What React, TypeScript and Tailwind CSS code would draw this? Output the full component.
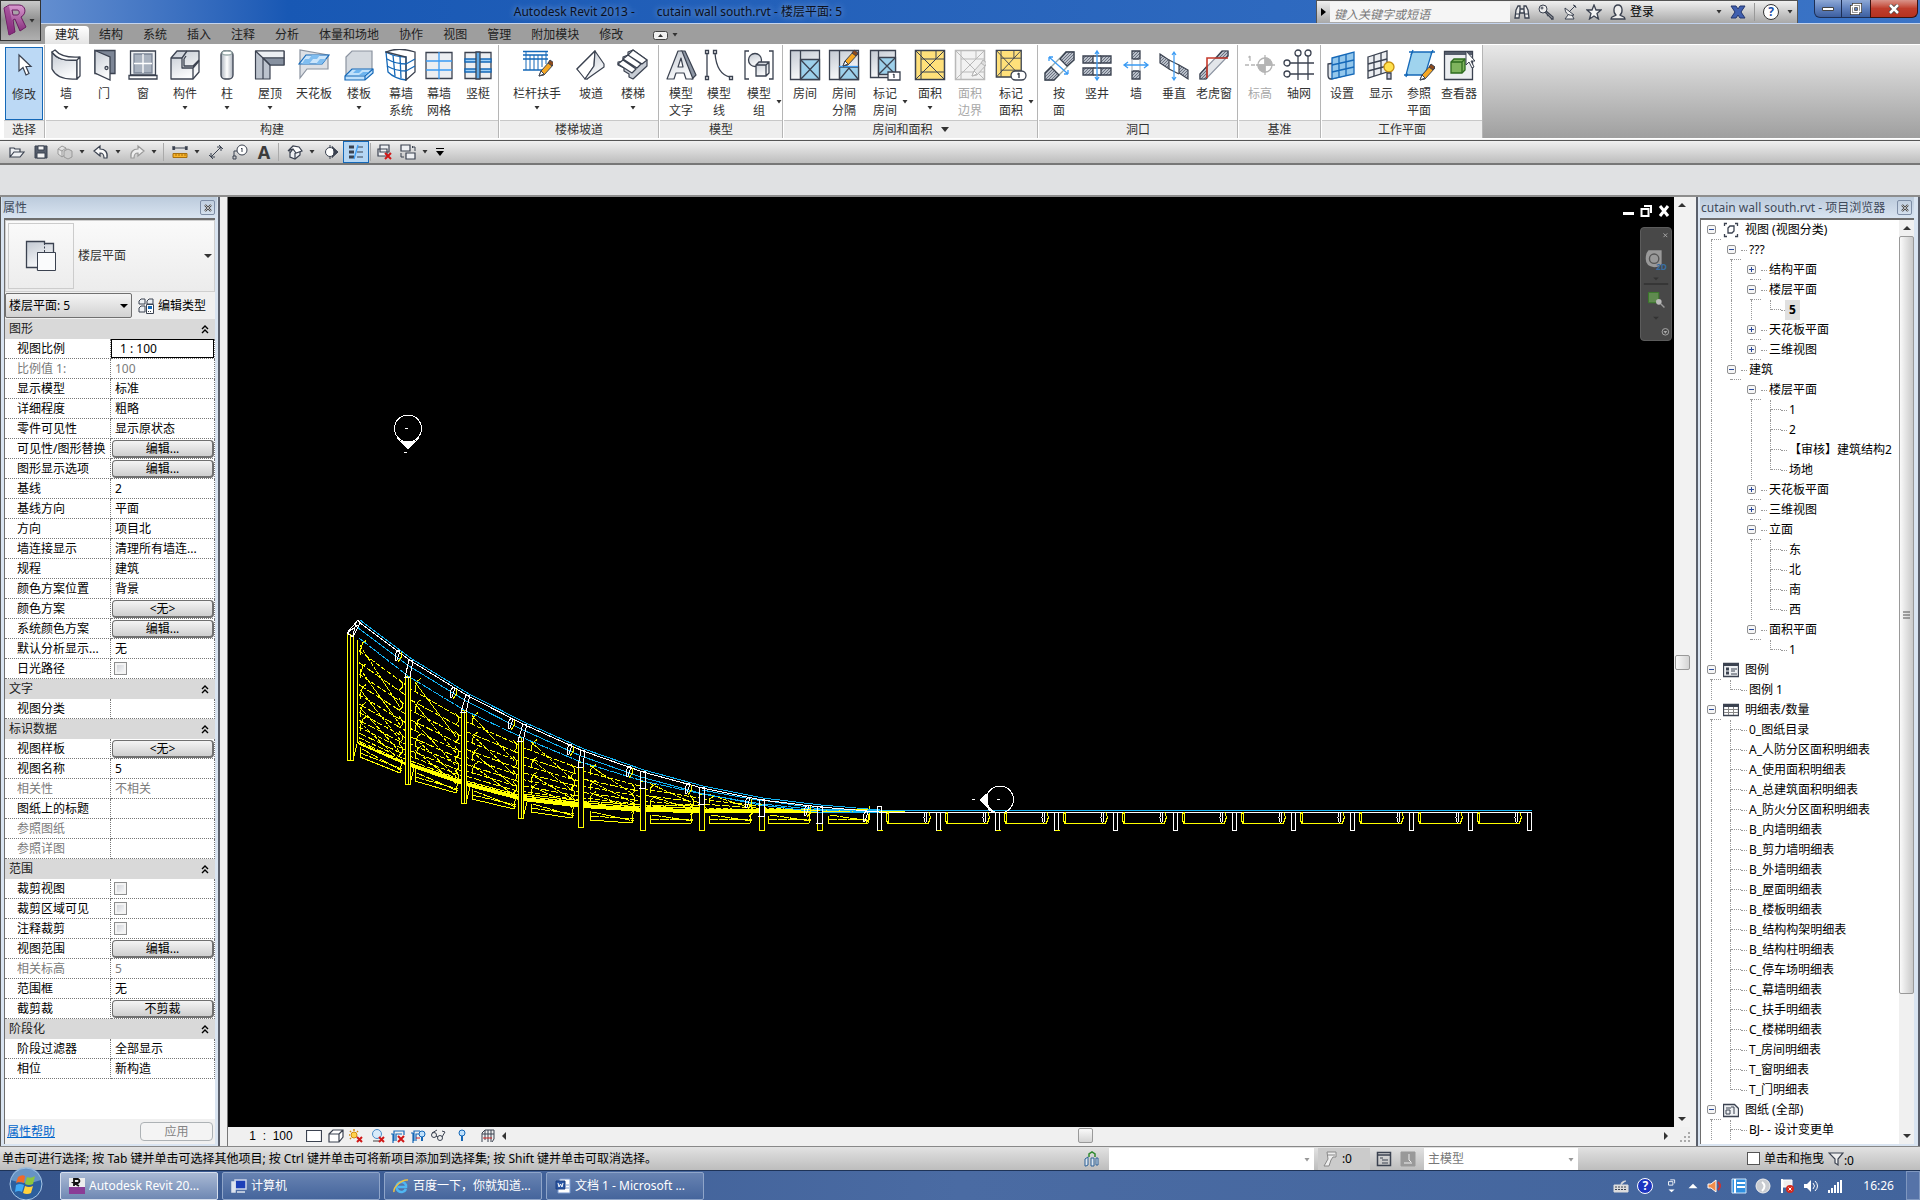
import type { ReactNode } from "react";
import clsx from "clsx";

const INK = "#3b4250";
const BLUE = "#1468b8";
const SKY = "#3a9bf4";

type Tool = {
  label: string[];
  icon: ReactNode;
  width: string;
  menu?: boolean;
  disabled?: boolean;
};

type Group = { title: string; tools: Tool[]; menu?: boolean; width: string };

/* ---------- ribbon icons ---------- */

function Pencil({ faded }: { faded?: boolean }) {
  return (
    <g stroke={faded ? "#b5b5b5" : INK} strokeWidth="1">
      <path d="M18 27 20 22 29 12l4 3-10 11z" fill={faded ? "#e8e8e8" : "#f7a823"} />
      <path d="M27 14l2-3 4 3-2 3z" fill={faded ? "#ddd" : "#8d4a1c"} />
      <path d="M18 27l2-5 3 3z" fill="#fff" />
    </g>
  );
}

function XBox({ fill, line = INK }: { fill: string; line?: string }) {
  return (
    <g stroke={line} fill="none">
      <path d="M1.500 1.500h29v29h-29z" fill={fill} strokeWidth="1.500" />
      <path d="M2 2l28 28M30 2 2 30M7 2v28M7 10h23M22 2v8M7 23h23" strokeWidth="1" />
    </g>
  );
}

const I = {
  cursor: <path d="M11 5v16l4-3.500 3 7.500 3-1.500-3-7h5z" fill="#fff" stroke={INK} strokeWidth="1.200" />,
  wall: (
    <g fill="url(#steel)" stroke={INK} strokeWidth="1.300" strokeLinejoin="round">
      <path d="M2 3c5 7 12 9 25 8v19C14 31 6 28 2 20z" />
      <path d="M2 3l3-2c5 6 12 8 25 7l-3 3C14 12 7 10 2 3zM27 11l3-3v19l-3 3z" fill="#fff" />
    </g>
  ),
  door: (
    <g stroke={INK} strokeWidth="1.300">
      <path d="M7 1.500h20v23H7z" fill="#7d8696" />
      <path d="M7 1.500 22 8v23L7 24z" fill="url(#steel)" />
      <circle cx="18.500" cy="19" r="1.500" fill="#fff" />
    </g>
  ),
  window: (
    <g stroke={INK} strokeWidth="1.300">
      <path d="M3.500 2h25v24h-25z" fill="#eef0f3" />
      <path d="M7 5h18v19H7z" fill="#a9b2bf" stroke="#7a8495" />
      <path d="M16 5v19M7 14.500h18" stroke="#fff" />
      <path d="M2 26.500h28v3.500H2z" fill="#fff" />
    </g>
  ),
  component: (
    <g fill="url(#steel)" stroke={INK} strokeWidth="1.300" strokeLinejoin="round">
      <path d="M2 9 8 2h22v21l-6 7H2z" />
      <path d="M2 9h11v10h11v11M13 9l5-7M17 7l-2 3v7h9l6-6M24 19l6-7" fill="none" />
    </g>
  ),
  column: (
    <g stroke={INK} strokeWidth="1.300">
      <rect x="10" y="2" width="12" height="28" rx="4" fill="url(#tube)" />
      <ellipse cx="16" cy="4" rx="5" ry="2" fill="#fff" stroke="#9aa" />
    </g>
  ),
  roof: (
    <g stroke={INK} strokeWidth="1.200" strokeLinejoin="round">
      <path d="M1.500 2H30v14H16v14H1.500z" fill="#bcc3cd" />
      <path d="M1.500 2 9 9h21V2z" fill="#eceff3" />
      <path d="M9 9h21v7H16z" fill="#8791a0" />
      <path d="M9 9l7 7M9 9v21" fill="none" />
    </g>
  ),
  ceiling: (
    <g strokeWidth="1.200">
      <path d="M2 1v28l7-9h21V6z" fill="#dde0e5" stroke="#8b93a0" />
      <path d="M8 6h23l-7 9H1z" fill="#cbe5fb" stroke={BLUE} />
      <path d="M14 6h8l-3 4h-8zM7 10h8l-4 5H4zM22 10h6l-4 5h-6z" fill="#7fbdf0" />
    </g>
  ),
  floor: (
    <g strokeWidth="1.200">
      <path d="M3 8 9 2h20v18l-8 7H3z" fill="#d4d9df" stroke="#8b93a0" />
      <path d="M9 20h21v4l-8 7H2v-4z" fill="#bfe0fb" stroke={BLUE} />
      <path d="M2 27h20l8-7M22 27v4" fill="none" stroke={BLUE} />
      <path d="M13 21h6l-3 3h-6zM20 23h6l-4 3h-6z" fill="#6db4ef" />
    </g>
  ),
  curtainSystem: (
    <g fill="none" stroke={BLUE} strokeWidth="1.300">
      <path d="M1 3c7 4 14 5 20 5v23C13 30 6 26 3 23z" fill="#fff" />
      <path d="M1 3c9-4 20-3 29 0v20l-9 8V8z" fill="none" stroke={INK} />
      <path d="M2 10c7 4 13 5 19 5M2 17c7 4 13 5 19 5M8 6l2 21M15 8l1 21M21 15l9-5M21 22l9-5" />
    </g>
  ),
  grid: (
    <g fill="none" strokeWidth="1.300">
      <path d="M3 3.500h26v26H3z" fill="#eceef1" stroke={INK} />
      <path d="M16 3v27M3 12h26M3 21h26" stroke={SKY} />
    </g>
  ),
  mullion: (
    <g fill="none" strokeWidth="1.300">
      <path d="M3 3.500h26v26H3z" fill="#eceef1" stroke={INK} />
      <path d="M3 10h26v3H3zM3 20h26v3H3z" fill="#9fd0f7" stroke={BLUE} />
      <path d="M14 3h4v27h-4z" fill="#5fa9e6" stroke={INK} />
    </g>
  ),
  railing: (
    <g strokeWidth="1.500" stroke={BLUE} fill="none">
      <path d="M2 2.500h25M2 6h25M2 10h25M2 21h22" />
      <path d="M5 3v18M9 6v15M13 6v15M17 6v15M21 6v12M25 3v12" strokeWidth="1" />
      <Pencil />
    </g>
  ),
  ramp: (
    <g stroke={INK} strokeWidth="1.200" strokeLinejoin="round">
      <path d="M20 2 2 20l10 10z" fill="#fff" />
      <path d="M20 2 2 20l8 10 9-13z" fill="#fff" />
      <path d="M20 2l9 13v3L12 30h-2l9-13z" fill="url(#steel)" />
    </g>
  ),
  stair: (
    <g stroke={INK} strokeWidth="1.200" strokeLinejoin="round">
      <path d="M1 16v-3l5-1V8l5-2V3l5-2 14 10v6L16 30l-4-2v-3l-5-3v-3z" fill="#c7ccd4" />
      <path d="M16 1l14 10-5 4-14-9zM11 6l13 9-4 4-14-9zM6 11l13 9-4 4L1 15z" fill="#fff" />
    </g>
  ),
  modelText: (
    <g stroke={INK} strokeWidth="1.200" strokeLinejoin="round">
      <path d="M16 2h4l11 24-4 4z" fill="#8e97a5" />
      <path d="M2 30h7l2-6h8l2 6h7L17 2h-4zM13 18l3-9 2 9z" fill="url(#steel)" fillRule="evenodd" />
    </g>
  ),
  modelLine: (
    <g fill="none" stroke={INK} strokeWidth="1.300">
      <path d="M4 4v24M12 4c1 14 6 22 15 24" />
      <path d="M2.500 1.500h3v3h-3zM2.500 27.500h3v3h-3zM10.500 1.500h3v3h-3zM26.500 27.500h3v3h-3z" fill="#fff" />
    </g>
  ),
  modelGroup: (
    <g fill="url(#steel)" stroke={INK} strokeWidth="1.300">
      <path d="M6 2H2v28h4M26 2h4v28h-4" fill="none" />
      <circle cx="12" cy="11" r="6.500" />
      <path d="M13 16l3-3h10v11l-3 3H13zM13 16h10v11M23 16l3-3" />
    </g>
  ),
  room: (
    <g stroke={INK} strokeWidth="1.300" fill="none">
      <path d="M1.500 1.500h29v29h-29z" fill="url(#steel)" />
      <path d="M11.500 10.500h19v20h-19z" fill="#9dd0ea" />
      <path d="M11.500 2v28M11.500 10.500l19 20M30.500 10.500l-19 20" />
    </g>
  ),
  roomSep: (
    <g stroke={INK} strokeWidth="1.300" fill="none">
      <path d="M1.500 1.500h29v29h-29z" fill="url(#steel)" />
      <path d="M11.500 18h19v12.500h-19z" fill="#9dd0ea" />
      <path d="M11.500 2v28M12 30l9-11 9 11" />
      <path d="M11 17.500h19" stroke={SKY} />
      <g transform="translate(-3 -10)">
        <Pencil />
      </g>
    </g>
  ),
  tagRoom: (
    <g stroke={INK} strokeWidth="1.300" fill="none">
      <path d="M1.500 1.500h25v27h-25z" fill="url(#steel)" />
      <path d="M9.500 8.500h17v17h-17z" fill="#9dd0ea" />
      <path d="M9.500 2v26M9.500 8.500l17 17M26.500 8.500l-17 17" />
      <path d="M19 23h12v8H19z" fill="#fff" />
      <path d="M25 25v4M24 26l1-1" />
    </g>
  ),
  area: <XBox fill="#ffe07a" />,
  areaBoundary: (
    <g>
      <XBox fill="#f2f2f2" line="#b9b9b9" />
      <Pencil faded />
    </g>
  ),
  tagArea: (
    <g>
      <g transform="scale(.86 .92)">
        <XBox fill="#ffe07a" />
      </g>
      <rect x="16" y="22" width="15" height="9" rx="4.500" fill="#fff" stroke={INK} strokeWidth="1.300" />
      <path d="M24 24v5M22.500 25.500 24 24" stroke={INK} strokeWidth="1.400" />
    </g>
  ),
  byFace: (
    <g strokeWidth="1.300">
      <path d="M31 3v8L11 31H2v-7L23 3z" fill="#fff" stroke="#9aa" />
      <path d="M23 3h8v8l-7 6-7-7zM2 24l6-6 8 8-5 5H2z" fill="url(#hatch)" stroke={INK} />
      <path d="M6 8l19 17M6 8v4M6 8h4M25 25v-4M25 25h-4" stroke={SKY} />
    </g>
  ),
  shaft: (
    <g strokeWidth="1.300">
      <path d="M2 7h10v7H2zM20 7h10v7H20zM2 19h10v7H2zM20 19h10v7H20z" fill="url(#hatch)" stroke={INK} />
      <path d="M12 7h8M12 14h8M12 19h8M12 26h8" stroke={INK} />
      <path d="M16 3v27M14 5l2-3 2 3M14 28l2 3 2-3" stroke={SKY} fill="none" />
    </g>
  ),
  wallOpening: (
    <g strokeWidth="1.300">
      <path d="M12 2h8v8h-8zM12 22h8v8h-8z" fill="url(#hatch)" stroke={INK} />
      <path d="M12 10v12M20 10v12" stroke="#b9bec6" />
      <path d="M5 16h22M8 13l-4 3 4 3M24 13l4 3-4 3" stroke={SKY} fill="none" />
    </g>
  ),
  vertical: (
    <g strokeWidth="1.200">
      <path d="M2 5l9 6v9l-9-6zM21 16l9 5v9l-9-6z" fill="url(#hatch)" stroke={INK} />
      <path d="M11 11l10 5M11 20l10 5" stroke={INK} />
      <path d="M16 4v26M14 6l2-3 2 3M14 28l2 3 2-3" stroke={SKY} fill="none" />
    </g>
  ),
  dormer: (
    <g strokeWidth="1.200" fill="none">
      <path d="M24 2h6v5L8 30H2v-5z" fill="#e3e6ea" stroke="#8b93a0" />
      <path d="M24 2h6v5l-2 2h-10zM9 17v12l-1 1H2v-5z" fill="url(#hatch)" stroke={INK} />
      <path d="M30 9H9v20" stroke="#c63a2c" strokeWidth="1.600" />
    </g>
  ),
  level: (
    <g stroke="#b5b5b5" fill="none" strokeWidth="1.300">
      <path d="M1 16h14" strokeDasharray="4 2" />
      <path d="M6 7v5M4.500 8.500 6 7" />
      <circle cx="21" cy="16" r="7" fill="#fff" />
      <path d="M21 9a7 7 0 0 1 7 7h-7zM21 23a7 7 0 0 1-7-7h7z" fill="#b5b5b5" />
      <path d="M21 6v20M12 16h19" />
    </g>
  ),
  axis: (
    <g stroke={INK} fill="#fff" strokeWidth="1.300">
      <path d="M15 7v24M25 7v24M6 14h25M6 25h25" />
      <circle cx="15" cy="4" r="3" />
      <circle cx="25" cy="4" r="3" />
      <circle cx="4" cy="14" r="3" />
      <circle cx="4" cy="25" r="3" />
    </g>
  ),
  setPlane: (
    <g fill="none" strokeWidth="1.300">
      <path d="M2 15l19-3v14L5 30q-3 0-3-4z" fill="#dfe3e8" stroke={INK} />
      <path d="M6 9l22-6v22L6 30z" fill="#93c7ec" stroke={BLUE} />
      <path d="M13 7v21M20 5v22M6 16l22-5M6 23l22-5" stroke={BLUE} />
    </g>
  ),
  showPlane: (
    <g fill="none" strokeWidth="1.300">
      <path d="M3 8l19-6v21L3 29z" fill="#eceef1" stroke={INK} />
      <path d="M9 6v21M16 4v21M3 15l19-5M3 22l19-5" stroke={INK} />
      <circle cx="24" cy="18" r="5" fill="#ffe14d" stroke="#c58f12" />
      <path d="M22 24h4v6h-4z" fill="#ccd" stroke={INK} />
    </g>
  ),
  refPlane: (
    <g fill="none" strokeWidth="1.300">
      <path d="M9 3h20l-7 23H3z" fill="#9fd3ee" stroke={BLUE} />
      <path d="M10 1 8 6M6 3h4M30 1l-2 4M28 3h4M1 26h4M4 24l-1 4" stroke={BLUE} />
      <g transform="translate(-1 4)">
        <Pencil />
      </g>
    </g>
  ),
  viewer: (
    <g strokeWidth="1.300">
      <path d="M1.500 2.500h28v28h-28z" fill="#eceef1" stroke={INK} />
      <path d="M2 3h27v3H2z" fill="#555d6b" />
      <path d="M8 13l3-3h11v11l-3 3H8z" fill="#7fb45e" stroke="#2d6b1e" />
      <path d="M8 13h11v11M19 13l3-3" stroke="#2d6b1e" fill="none" />
      <path d="M23 2v14l3-3 3 6 2-1-3-6h4z" fill="#fff" stroke={INK} strokeWidth="1" />
    </g>
  ),
};

const GROUPS: Group[] = [
  {
    title: "选择",
    width: "w-10",
    tools: [{ label: ["修改"], icon: I.cursor, width: "w-[38px]" }],
  },
  {
    title: "构建",
    width: "w-[452px]",
    tools: [
      { label: ["墙"], icon: I.wall, width: "w-10", menu: true },
      { label: ["门"], icon: I.door, width: "w-9" },
      { label: ["窗"], icon: I.window, width: "w-[42px]" },
      { label: ["构件"], icon: I.component, width: "w-[42px]", menu: true },
      { label: ["柱"], icon: I.column, width: "w-[42px]", menu: true },
      { label: ["屋顶"], icon: I.roof, width: "w-11", menu: true },
      { label: ["天花板"], icon: I.ceiling, width: "w-11" },
      { label: ["楼板"], icon: I.floor, width: "w-[46px]", menu: true },
      { label: ["幕墙", "系统"], icon: I.curtainSystem, width: "w-[38px]" },
      { label: ["幕墙", "网格"], icon: I.grid, width: "w-[38px]" },
      { label: ["竖梃"], icon: I.mullion, width: "w-10" },
    ],
  },
  {
    title: "楼梯坡道",
    width: "w-[158px]",
    tools: [
      { label: ["栏杆扶手"], icon: I.railing, width: "w-[74px]", menu: true },
      { label: ["坡道"], icon: I.ramp, width: "w-[34px]" },
      { label: ["楼梯"], icon: I.stair, width: "w-[50px]", menu: true },
    ],
  },
  {
    title: "模型",
    width: "w-[122px]",
    tools: [
      { label: ["模型", "文字"], icon: I.modelText, width: "w-[42px]" },
      { label: ["模型", "线"], icon: I.modelLine, width: "w-[34px]" },
      { label: ["模型", "组"], icon: I.modelGroup, width: "w-[46px]", menu: true },
    ],
  },
  {
    title: "房间和面积",
    width: "w-[253px]",
    menu: true,
    tools: [
      { label: ["房间"], icon: I.room, width: "w-[42px]" },
      { label: ["房间", "分隔"], icon: I.roomSep, width: "w-9" },
      { label: ["标记", "房间"], icon: I.tagRoom, width: "w-[46px]", menu: true },
      { label: ["面积"], icon: I.area, width: "w-11", menu: true },
      { label: ["面积", "边界"], icon: I.areaBoundary, width: "w-9", disabled: true },
      { label: ["标记", "面积"], icon: I.tagArea, width: "w-[46px]", menu: true },
    ],
  },
  {
    title: "洞口",
    width: "w-[198px]",
    tools: [
      { label: ["按", "面"], icon: I.byFace, width: "w-10" },
      { label: ["竖井"], icon: I.shaft, width: "w-9" },
      { label: ["墙"], icon: I.wallOpening, width: "w-[42px]" },
      { label: ["垂直"], icon: I.vertical, width: "w-[34px]" },
      { label: ["老虎窗"], icon: I.dormer, width: "w-[46px]" },
    ],
  },
  {
    title: "基准",
    width: "w-[81px]",
    tools: [
      { label: ["标高"], icon: I.level, width: "w-[42px]", disabled: true },
      { label: ["轴网"], icon: I.axis, width: "w-9" },
    ],
  },
  {
    title: "工作平面",
    width: "w-[160px]",
    tools: [
      { label: ["设置"], icon: I.setPlane, width: "w-10" },
      { label: ["显示"], icon: I.showPlane, width: "w-[38px]" },
      { label: ["参照", "平面"], icon: I.refPlane, width: "w-[38px]" },
      { label: ["查看器"], icon: I.viewer, width: "w-[42px]" },
    ],
  },
];

const TABS = ["建筑", "结构", "系统", "插入", "注释", "分析", "体量和场地", "协作", "视图", "管理", "附加模块", "修改"];

/* ---------- small shared bits ---------- */

function Glyph({ children, size = "size-4" }: { children: ReactNode; size?: string }) {
  return (
    <svg viewBox="0 0 16 16" className={clsx(size, "shrink-0")} fill="none" stroke={INK} aria-hidden>
      {children}
    </svg>
  );
}

function Caret({ className }: { className?: string }) {
  return (
    <svg viewBox="0 0 6 4" className={clsx("h-1 w-1.5 shrink-0", className)} aria-hidden>
      <path d="M.5 0h5L3 3.500z" fill="#333" />
    </svg>
  );
}

function Defs() {
  return (
    <svg className="absolute size-0" aria-hidden>
      <defs>
        <linearGradient id="steel" x1="0" y1="0" x2="0.4" y2="1">
          <stop offset="0" stopColor="#c3c9d2" />
          <stop offset="1" stopColor="#fafbfc" />
        </linearGradient>
        <linearGradient id="tube">
          <stop offset="0" stopColor="#a9b0bb" />
          <stop offset=".5" stopColor="#fff" />
          <stop offset="1" stopColor="#a9b0bb" />
        </linearGradient>
        <linearGradient id="rlogo" x1="0" y1="0" x2="0" y2="1">
          <stop offset="0" stopColor="#d99bd0" />
          <stop offset="1" stopColor="#7a2070" />
        </linearGradient>
        <pattern id="hatch" width="3" height="3" patternUnits="userSpaceOnUse">
          <rect width="3" height="3" fill="#b9bfc9" />
          <path d="M0 3 3 0" stroke="#6a7280" />
        </pattern>
      </defs>
    </svg>
  );
}

/* ---------- title bar ---------- */

const captionButton =
  "flex h-[18px] items-center justify-center border border-t-0 border-[#1d2f55] bg-linear-to-b from-[#8fa9d6] via-[#5f80bd] to-[#3d5f9f]";

function TitleBar() {
  return (
    <header className="flex h-6 items-start border-b border-[#c4d4ee] bg-linear-to-r from-[#6f97d4] via-[#1858b4] via-15% to-[#3b74c6]">
      <h1 className="flex-1 pl-10 text-center text-xs leading-6 whitespace-pre text-[#0b1020] [text-shadow:0_0_6px_#9dbbe8]">
        {"Autodesk Revit 2013 -       cutain wall south.rvt - 楼层平面: 5"}
      </h1>
      <div className="flex h-[23px] w-[482px] items-center border-x border-t border-[#555] bg-linear-to-b from-[#f0f0f0] to-[#a8a8a8]">
        <svg viewBox="0 0 5 8" className="mx-1 h-2 w-[5px]" aria-hidden>
          <path d="M0 0v8l5-4z" />
        </svg>
        <input
          aria-label="搜索"
          placeholder="键入关键字或短语"
          className="h-5 w-[180px] bg-[#f5f5f5] px-1 pt-1 text-xs italic outline-none placeholder:text-[#777]"
        />
        <div className="flex items-center gap-2 pl-1">
          <button aria-label="搜索帮助">
            <Glyph>
              <path d="M2 6 4 2h2v4l-1 8H1zM14 6l-2-4h-2v4l1 8h4zM6 5h4v4H6z" fill="#eee" strokeWidth="1.300" />
              <path d="M1 10h4M11 10h4" />
            </Glyph>
          </button>
          <button aria-label="速博">
            <Glyph>
              <circle cx="5" cy="5" r="4" fill="#eee" />
              <circle cx="4" cy="4" r="1" />
              <path d="M7 8l7 7M8 7l7 6v2h-2M10 11l-1 1" strokeWidth="1.300" />
            </Glyph>
          </button>
          <button aria-label="通讯中心">
            <Glyph>
              <path d="M3 4c0 6 4 8 9 7zM8 7l5-5M11 1a3 3 0 0 1 3 3M6 11l-3 4h9l-2-4" fill="#eee" />
            </Glyph>
          </button>
          <button aria-label="收藏夹">
            <Glyph>
              <path d="M8 1l2 5h5l-4 3.500 1.500 5.500L8 12l-4.500 3L5 9.500 1 6h5z" fill="#f4f4f4" strokeWidth="1.300" />
            </Glyph>
          </button>
          <button className="flex items-center gap-1 text-xs">
            <Glyph>
              <path d="M1 15c0-3 3-2 5-4C3 9 3 1 8 1s5 8 2 10c2 2 5 1 5 4z" fill="#eee" strokeWidth="1.300" />
            </Glyph>
            登录
          </button>
        </div>
        <Caret className="ml-auto" />
        <button aria-label="Exchange Apps" className="mr-2 ml-2">
          <Glyph>
            <path d="M1 2h5l2 3 2-3h5l-4 6 4 6h-5l-2-3-2 3H1l4-6z" fill="#3f5fb0" stroke="#24366e" />
          </Glyph>
        </button>
        <span className="h-[18px] w-px bg-[#999]" />
        <button aria-label="帮助" className="mx-2 flex size-4 items-center justify-center rounded-full border border-[#333] bg-white text-xs font-bold text-[#1d4fa8]">
          ?
        </button>
        <Caret className="mr-1" />
      </div>
      <div className="flex pr-0.5 pl-4">
        <button aria-label="最小化" className={clsx(captionButton, "w-7 rounded-bl-md")}>
          <svg viewBox="0 0 12 4" className="h-1 w-3"><path d="M.5.500h11v3H.5z" fill="#fff" stroke="#444" /></svg>
        </button>
        <button aria-label="向下还原" className={clsx(captionButton, "w-7 border-x-0")}>
          <svg viewBox="0 0 12 12" className="size-3" fill="none">
            <path d="M3.500 1.500h7v7h-7zM1.500 3.500h7v7h-7z" stroke="#333" strokeWidth="3" />
            <path d="M3.500 1.500h7v7h-7zM1.500 3.500h7v7h-7z" stroke="#fff" strokeWidth="1.500" />
          </svg>
        </button>
        <button
          aria-label="关闭"
          className="flex h-[18px] w-12 items-center justify-center rounded-br-md border border-t-0 border-[#3b1310] bg-linear-to-b from-[#d9938a] via-[#bf3d2c] to-[#b5321f]"
        >
          <svg viewBox="0 0 12 10" className="h-2.5 w-3">
            <path d="M2 1l8 8M10 1 2 9" stroke="#444" strokeWidth="4" />
            <path d="M2 1l8 8M10 1 2 9" stroke="#fff" strokeWidth="2.500" />
          </svg>
        </button>
      </div>
    </header>
  );
}

function AppButton() {
  return (
    <button
      aria-label="应用程序菜单"
      className="absolute top-0 left-0 z-10 flex h-[41px] w-[41px] items-center border border-[#333] bg-linear-to-b from-[#c9c9c9] via-[#8f8f8f] to-[#b0b0b0]"
    >
      <svg viewBox="0 0 28 34" className="h-[34px] w-7" aria-hidden>
        <path d="M3 4l5-3h10c7 0 8 9 2 12l5 10-6 4-5-12-2 1 2 12-6 3z" fill="url(#rlogo)" stroke="#6b1c62" />
        <path d="M11 6h5c3 0 3 5 0 5h-4z" fill="#a9a3a8" stroke="#6b1c62" />
        <path d="M3 4l5-2 5 26-5 3z" fill="#8c2f82" opacity=".6" />
      </svg>
      <Caret />
    </button>
  );
}

/* ---------- ribbon ---------- */

function RibbonTool({ tool, active }: { tool: Tool; active?: boolean }) {
  const twoLines = tool.label.length > 1;
  return (
    <button
      disabled={tool.disabled}
      className={clsx(
        "relative flex h-[73px] flex-col items-center pt-0.5 text-xs leading-[17px]",
        tool.width,
        tool.disabled ? "text-[#a8a8a8]" : "text-[#333]",
        active && "border border-[#1468b8] bg-[#bcd9f5]",
      )}
    >
      <svg viewBox="0 0 32 32" className="size-8 shrink-0" aria-hidden>
        {tool.icon}
      </svg>
      <span className="mt-1 block">
        {tool.label.map((line) => (
          <span key={line} className="block text-center whitespace-nowrap">
            {line}
          </span>
        ))}
      </span>
      {tool.menu && <Caret className={twoLines ? "absolute right-0 bottom-4" : "mt-1"} />}
    </button>
  );
}

function Ribbon() {
  return (
    <div className="border-b border-[#555] bg-[#f4f4f4] pb-px">
      <div className="flex border-y border-white">
        {GROUPS.map((g, i) => (
          <section key={g.title} className="flex shrink-0 border-r border-[#b5b5b5] bg-white pl-px">
            <div className={clsx("flex flex-col", g.width, i === 0 && "ml-[3px]")}>
              <div className={clsx("flex h-[75px] items-start pt-0.5", i === 0 && "justify-center")}>
                {g.tools.map((t) => (
                  <RibbonTool key={t.label.join("")} tool={t} active={i === 0} />
                ))}
              </div>
              <h2 className="flex h-[18px] items-center justify-center gap-2 border-t border-[#c8c8c8] bg-[#eeeeee] text-xs text-[#333]">
                {g.title}
                {g.menu && (
                  <svg viewBox="0 0 8 5" className="h-[5px] w-2"><path d="M0 0h8L4 5z" fill="#333" /></svg>
                )}
              </h2>
            </div>
          </section>
        ))}
        <div className="flex-1 bg-linear-to-b from-[#e8e8e8] to-[#9f9f9f]" />
      </div>
    </div>
  );
}

function RibbonTabs() {
  return (
    <nav className="flex h-5 items-end bg-[#9e9e9e] pl-[45px] text-xs text-[#222]">
      {TABS.map((t, i) => (
        <button
          key={t}
          className={clsx(
            "h-[18px] px-2.5 leading-[18px]",
            i === 0 && "rounded-t-sm bg-linear-to-b from-white to-[#e4e4e4]",
          )}
        >
          {t}
        </button>
      ))}
      <button aria-label="最小化功能区" className="ml-5 flex h-[18px] items-center gap-1">
        <svg viewBox="0 0 15 9" className="h-[9px] w-[15px]">
          <rect x=".5" y=".5" width="14" height="8" rx="2" fill="#f2f2f2" stroke="#444" />
          <path d="M5 6l2.500-3L10 6z" fill="#333" />
        </svg>
        <Caret />
      </button>
    </nav>
  );
}

/* ---------- quick access ---------- */

function QuickButton({ label, menu, on, children }: { label: string; menu?: boolean; on?: boolean; children: ReactNode }) {
  return (
    <button
      aria-label={label}
      className={clsx("flex h-[22px] items-center gap-1.5 px-1", on && "border border-[#1468b8] bg-[#b5d6f4]")}
    >
      <Glyph>{children}</Glyph>
      {menu && <Caret />}
    </button>
  );
}

function QuickAccess() {
  return (
    <div className="flex h-6 items-center border-b-2 border-[#777] bg-linear-to-b from-[#f0f0f0] to-[#bdbdbd] pl-[5px]">
      <QuickButton label="打开">
        <path d="M1 13V4h4l1 1h5v3M1 13l4-5h10l-4 5z" fill="#eef0f3" strokeWidth="1.200" />
      </QuickButton>
      <QuickButton label="保存">
        <path d="M2 2h12v12H2z" fill="#555d6b" />
        <path d="M5 2h6v4H5zM4 9h8v5H4z" fill="#f4f4f4" />
      </QuickButton>
      <QuickButton label="同步" menu>
        <path d="M1 5l4-3 4 2v6l-4 3-4-3zM1 5l4 2 4-3M5 7v6" fill="#e4e4e4" stroke="#999" />
        <path d="M7 7l4-2 4 2v6l-4 2-4-2z" fill="#ccc" stroke="#999" />
      </QuickButton>
      <QuickButton label="放弃" menu>
        <path d="M1 7l6-5v3c5 0 8 3 7 9h-3c0-4-1-5-4-5v3z" fill="#fafafa" strokeWidth="1.200" />
      </QuickButton>
      <QuickButton label="重做" menu>
        <path d="M15 7 9 2v3C4 5 1 8 2 14h3c0-4 1-5 4-5v3z" fill="#eee" stroke="#999" strokeWidth="1.200" />
      </QuickButton>
      <span className="mr-1 ml-0.5 h-[18px] w-px bg-[#aaa]" />
      <QuickButton label="测量" menu>
        <path d="M1 4h14M1 2v4M15 2v4M3 2.500 1 4l2 1.500M13 2.500 15 4l-2 1.500" strokeWidth="1.200" />
        <path d="M1 9.500h14v4H1z" fill="#f7b32a" stroke="#a86f0d" />
        <path d="M4 10v2M7 10v2M10 10v2M13 10v2" stroke="#a86f0d" />
      </QuickButton>
      <QuickButton label="对齐尺寸标注">
        <path d="M3 13 13 3M3 9v4h4M13 7V3H9M1 11l4 4M11 1l4 4" />
      </QuickButton>
      <QuickButton label="按类别标记">
        <circle cx="10" cy="6" r="5" fill="#fff" />
        <path d="M10 4v4M9 5l1-1M5 7H2v5M1 12h3v3H1z" />
      </QuickButton>
      <button aria-label="文字" className="flex h-[22px] w-6 items-center justify-center text-lg font-bold text-[#3b3b3b]">
        A
      </button>
      <span className="mr-1 ml-0.5 h-[18px] w-px bg-[#aaa]" />
      <QuickButton label="默认三维视图" menu>
        <path d="M3 7v6l5 2 5-4V6" fill="#eef0f3" strokeWidth="1.200" />
        <path d="M1 7l5-5 6 1 3 4-6 2-3-4zM8 9v6M6 5 3 9" fill="#fff" strokeWidth="1.200" />
      </QuickButton>
      <QuickButton label="剖面">
        <circle cx="7" cy="8" r="4.500" fill="#fff" />
        <path d="M7 1v2.500M7 12.500V15" />
        <path d="M9 2.500 15 8l-6 5.500q4-5.500 0-11z" fill={INK} />
      </QuickButton>
      <QuickButton label="细线" on>
        <path d="M1 3h5M1 8h5M1 13h5" strokeWidth="3" />
        <path d="M9 3h6M9 8h6M9 13h6" strokeWidth="1.200" />
        <path d="M10 1 6 15" stroke={SKY} strokeWidth="1.300" />
      </QuickButton>
      <span className="mx-px h-[18px] w-px bg-[#aaa]" />
      <QuickButton label="关闭隐藏对象">
        <path d="M4 1h9v7H4zM2 5h9v7H2z" fill="#eef0f3" strokeWidth="1.200" />
        <path d="M9 9l6 6M15 9l-6 6" stroke="#d01818" strokeWidth="2" />
      </QuickButton>
      <QuickButton label="切换窗口" menu>
        <path d="M1 1h9v6H1zM6 9h9v6H6z" fill="#eef0f3" strokeWidth="1.200" />
        <path d="M1 9v4h3M15 7V3h-3M13 2l-1 1 1 1" />
      </QuickButton>
      <button aria-label="自定义快速访问工具栏" className="flex flex-col items-center gap-0.5 px-1">
        <span className="h-px w-2 bg-black" />
        <svg viewBox="0 0 8 5" className="h-[5px] w-2"><path d="M0 0h8L4 5z" /></svg>
      </button>
    </div>
  );
}

/* ---------- properties palette ---------- */

type Prop = { name: string; value?: string; kind?: "button" | "check" | "scale"; dim?: boolean };

const PROPS: { group: string; rows: Prop[] }[] = [
  {
    group: "图形",
    rows: [
      { name: "视图比例", value: "1 : 100", kind: "scale" },
      { name: "比例值 1:", value: "100", dim: true },
      { name: "显示模型", value: "标准" },
      { name: "详细程度", value: "粗略" },
      { name: "零件可见性", value: "显示原状态" },
      { name: "可见性/图形替换", value: "编辑...", kind: "button" },
      { name: "图形显示选项", value: "编辑...", kind: "button" },
      { name: "基线", value: "2" },
      { name: "基线方向", value: "平面" },
      { name: "方向", value: "项目北" },
      { name: "墙连接显示", value: "清理所有墙连..." },
      { name: "规程", value: "建筑" },
      { name: "颜色方案位置", value: "背景" },
      { name: "颜色方案", value: "<无>", kind: "button" },
      { name: "系统颜色方案", value: "编辑...", kind: "button" },
      { name: "默认分析显示...", value: "无" },
      { name: "日光路径", kind: "check" },
    ],
  },
  { group: "文字", rows: [{ name: "视图分类" }] },
  {
    group: "标识数据",
    rows: [
      { name: "视图样板", value: "<无>", kind: "button" },
      { name: "视图名称", value: "5" },
      { name: "相关性", value: "不相关", dim: true },
      { name: "图纸上的标题" },
      { name: "参照图纸", dim: true },
      { name: "参照详图", dim: true },
    ],
  },
  {
    group: "范围",
    rows: [
      { name: "裁剪视图", kind: "check" },
      { name: "裁剪区域可见", kind: "check" },
      { name: "注释裁剪", kind: "check" },
      { name: "视图范围", value: "编辑...", kind: "button" },
      { name: "相关标高", value: "5", dim: true },
      { name: "范围框", value: "无" },
      { name: "截剪裁", value: "不剪裁", kind: "button" },
    ],
  },
  {
    group: "阶段化",
    rows: [
      { name: "阶段过滤器", value: "全部显示" },
      { name: "相位", value: "新构造" },
    ],
  },
];

function PropValue({ row }: { row: Prop }) {
  if (row.kind === "button")
    return (
      <button
        id={row.name}
        className="mx-px block h-[18px] w-[102px] rounded-sm border border-r-2 border-b-2 border-[#707070] bg-linear-to-b from-[#f4f4f4] to-[#cfcfcf] text-center leading-[15px]"
      >
        {row.value}
      </button>
    );
  if (row.kind === "check")
    return (
      <input
        id={row.name}
        type="checkbox"
        className="ml-[3px] block size-[13px] appearance-none border border-[#8e8f8f] bg-linear-to-br from-[#c9ccd2] to-white shadow-[inset_0_0_0_2px_#f4f4f4]"
      />
    );
  if (row.kind === "scale")
    return <input id={row.name} defaultValue={row.value} className="block h-[19px] w-full border border-black px-2 outline-none" />;
  return <span className="block truncate pl-1">{row.value}</span>;
}

function PanelTitle({ children }: { children: ReactNode }) {
  return (
    <div className="flex h-[21px] shrink-0 items-center justify-between bg-linear-to-b from-[#bccbdc] to-[#d9e4f1] pl-px text-xs text-[#3f4a5a]">
      <h2 className="truncate">{children}</h2>
      <button aria-label="关闭" className="mr-0.5 flex size-[15px] shrink-0 items-center justify-center rounded-xs border border-[#7e8ea6]">
        <svg viewBox="0 0 8 8" className="size-2">
          <path d="M1 1l6 6M7 1 1 7" stroke="#444" strokeWidth="2.200" />
          <path d="M1 1l6 6M7 1 1 7" stroke="#eee" strokeWidth=".7" />
        </svg>
      </button>
    </div>
  );
}

function Properties() {
  return (
    <aside className="flex w-[220px] shrink-0 flex-col border-r-2 border-l border-r-[#5a5f6b] border-l-[#555] bg-[#d9e4f1] px-px">
      <PanelTitle>属性</PanelTitle>
      <div className="mx-0.5 mb-0.5 flex min-h-0 flex-1 flex-col border-t-2 border-l border-[#6e6e6e] bg-white text-xs">
        <button className="flex h-[72px] shrink-0 items-center border border-[#cfcfcf] bg-linear-to-b from-[#fafafa] to-[#ececec] text-[#333]">
          <span className="ml-0.5 flex size-[66px] items-center justify-center border border-[#ccc]">
            <svg viewBox="0 0 32 32" className="size-8" fill="url(#steel)" stroke={INK} aria-hidden>
              <path d="M1.500 1.500h18v2h9v26h-16v-2h-11z" strokeWidth="1.300" />
              <path d="M12.500 12.500h18v18h-18z" fill="#fafbfc" />
              <path d="M19.500 3v10M12.500 13v15M12.500 12.500h17" strokeDasharray="2 1.500" />
            </svg>
          </span>
          <span className="ml-1">楼层平面</span>
          <svg viewBox="0 0 8 4" className="mr-0.5 ml-auto h-1 w-2"><path d="M0 0h8L4 4z" fill="#333" /></svg>
        </button>
        <div className="flex h-[27px] shrink-0 items-center bg-[#f0f0f0]">
          <div className="relative">
            <select
              aria-label="属性过滤器"
              className="h-[25px] w-[127px] appearance-none rounded-xs border border-[#707070] bg-linear-to-b from-[#f4f4f4] to-[#d2d2d2] pl-[3px]"
            >
              <option>楼层平面: 5</option>
            </select>
            <svg viewBox="0 0 8 4" className="pointer-events-none absolute top-[11px] right-1 h-1 w-2"><path d="M0 0h8L4 4z" /></svg>
          </div>
          <button className="ml-1.5 flex items-center gap-1">
            <Glyph>
              <path d="M1 3l2-2h4v5H1zM9 3l2-2h4v5H9zM1 10l2-2h4v6H1z" fill="#eef0f3" />
              <path d="M8.500 6.500h7v9h-7z" fill="#fff" />
              <path d="M10 8h4v3h-4z" fill={BLUE} stroke="none" />
              <path d="M10 13.500h4" strokeDasharray="1 1" />
            </Glyph>
            编辑类型
          </button>
        </div>
        <table className="w-full table-fixed border-separate border-spacing-0 leading-[18px]">
          <colgroup>
            <col className="w-[106px]" />
            <col />
          </colgroup>
          {PROPS.map(({ group, rows }) => (
            <tbody key={group}>
              <tr>
                <th colSpan={2} className="h-5 bg-[#d9d9d9] p-0 text-left font-normal text-[#222]">
                  <span className="flex items-center justify-between pr-1.5 pl-1">
                    {group}
                    <svg viewBox="0 0 8 9" className="h-[9px] w-2"><path d="M1 4l3-3 3 3M1 8l3-3 3 3" stroke="#000" strokeWidth="1.400" fill="none" /></svg>
                  </span>
                </th>
              </tr>
              {rows.map((row) => (
                <tr key={row.name} className={row.dim ? "text-[#7b7b7b]" : "text-black"}>
                  <td className="h-5 border-r border-b border-dotted border-[#777] p-0 pl-3">
                    <label htmlFor={row.kind && row.name} className="block truncate">
                      {row.name}
                    </label>
                  </td>
                  <td className="h-5 border-r border-b border-dotted border-[#777] p-0">
                    <PropValue row={row} />
                  </td>
                </tr>
              ))}
            </tbody>
          ))}
        </table>
        <div className="mt-auto flex h-[25px] shrink-0 items-center justify-between bg-[#f0f0f0] px-0.5">
          <a href="#help" className="text-[#0066cc] underline">
            属性帮助
          </a>
          <button disabled className="h-[19px] w-[73px] rounded-sm border border-[#adb2b5] bg-[#f4f4f4] leading-4 text-[#838383]">
            应用
          </button>
        </div>
      </div>
    </aside>
  );
}

/* ---------- drawing ---------- */

const HEAD = [[359, 621], [411, 660], [468, 695], [525, 724], [583, 750], [643, 771], [702, 787], [762, 799], [820, 806], [879, 811]];
const SILL = [[359, 638], [408, 676], [464, 710], [521, 737], [581, 762], [643, 781], [702, 794], [762, 804], [820, 810], [879, 812]];
const BASE = [[358, 743], [408, 765], [466, 785], [523, 800], [583, 807], [643, 811], [702, 812], [762, 812], [820, 812], [879, 812]];
const FOOT = [760, 784, 803, 818, 827, 830, 830, 830, 830, 830];
const BAYS = [
  [360, 757, 402, 773],
  [415, 781, 458, 793],
  [472, 799, 516, 809],
  [531, 812, 574, 818],
  [590, 820, 634, 823],
  [650, 823, 693, 823],
  [709, 823, 752, 823],
  [768, 823, 811, 823],
  [828, 823, 870, 823],
];

const path = (pts: number[][], dx = 0, dy = 0) => pts.map(([x, y]) => `${x + dx},${y + dy}`).join(" ");
const at = (i: number, t: number) => SILL[i][1] + (BASE[i][1] - SILL[i][1]) * (1 - Math.pow(1 - t, 1.6));

function CurvedWall() {
  const ties = path(HEAD.slice(0, 9), -2, 6) + " 879,812";
  return (
    <>
      <g stroke="#ff0">
        {BAYS.map(([x1, y1, x2, y2], i) => {
          const n = [13, 12, 11, 10, 8, 6, 5, 3, 2][i];
          const slats = Array.from({ length: n }, (_, k) => (k + 1) / n);
          return (
            <g key={x1}>
              {slats.map((t, k) => (
                <g key={t}>
                  <path d={`M${SILL[i][0]} ${at(i, t)}L${SILL[i + 1][0]} ${at(i + 1, t)}`} strokeDasharray={k % 2 ? "8 2" : "5 2"} />
                  {k % 2 === 0 && i < 7 && k < n - 3 && (
                    <>
                      <path
                        d={`M${x1} ${at(i, t) - 5}L${x2 - 2} ${at(i + 1, Math.min(1, t + 0.16))}`}
                        strokeDasharray="4 1"
                      />
                      <path
                        d={`M${x1} ${at(i, t)}l3 ${-8 + i}l3 -2M${x1} ${at(i, t)}v4M${x2 - 3} ${at(i + 1, t) - 8 + i}l3 4v5l-3 3`}
                      />
                    </>
                  )}
                </g>
              ))}
              <path d={`M${x1} ${BASE[i][1] + 4}V${y1}L${x2 - 2} ${y2}L${x2} ${BASE[i + 1][1] - 6}`} />
              <path d={`M${x1} ${y1 - 4}L${x2} ${y2 - 4}M${x1 + 2} ${y1 - 8}L${x2} ${y2 - 2}`} strokeDasharray="9 1" />
            </g>
          );
        })}
        <polyline points={path(BASE)} strokeWidth="2" />
        <polyline points={path(BASE.slice(1), 0, -2)} strokeWidth="2" />
        <polyline points={path(BASE.slice(2, 8), 0, -4)} />
        <polyline points={path(BASE.slice(3, 7), 0, -6)} strokeDasharray="12 1" />
        <path d="M879 812h26" strokeWidth="2" />
        {SILL.slice(0, 9).map(([x, y], i) => {
          const left = i ? x - 3 : 347;
          const right = i ? x + 2 : 353;
          return (
            <g key={x}>
              <path d={`M${left} ${i ? y : 633}V${FOOT[i]}H${right}V${i ? y : 636}z`} fill="#000" />
              {i < 4 && <path d={`M${left + 3} ${i ? y : 636}V${FOOT[i]}M${right} ${FOOT[i]}l4 -16`} />}
            </g>
          );
        })}
        <path d="M357.500 640v103" />
      </g>
      <g stroke="#12b4f5">
        <polyline points={path(HEAD, 1, -1)} />
        <polyline points={ties} />
        <polyline points={path(SILL)} strokeDasharray="12 1" />
        <path d="M762 800l58 9 60 2M702 790l60 11" />
      </g>
      <g stroke="#fff">
        <polyline points={path(HEAD, 0, 1)} />
        {HEAD.slice(0, 9).map(([x, y], i) =>
          i === 0 ? (
            <path key={x} d="M358 620l-11 13 6 4 7-14zM356 622l-3 14M347 633l11-8" />
          ) : (
            <path key={x} d={`M${x - 2} ${y}L${SILL[i][0] - 3} ${Math.max(SILL[i][1], y + 17)}h5L${x + 2} ${y}z`} />
          ),
        )}
        {[[398, 655], [453, 692], [511, 723], [570, 749], [629, 771], [688, 788], [748, 802], [807, 810], [866, 816]].map(([x, y]) => (
          <g key={x}>
            <path d={`M${x} ${y - 5}l-3 5v5h2l2-6v-4z`} />
            <path d={`M${x + 3} ${y - 3}l1 4-4 6`} stroke="#ff0" />
          </g>
        ))}
      </g>
    </>
  );
}

function StraightWall() {
  const posts = Array.from({ length: 12 }, (_, k) => 879.5 + Math.round(59.1 * k));
  return (
    <>
      <path d="M879 810.500H1532" stroke="#12b4f5" />
      <path d="M879 812.500H1532" stroke="#fff" />
      {posts.map((c, k) => (
        <g key={c}>
          {k < 11 && (
            <>
              <path d={`M${c + 49} 823H${c + 8}l-1-3v-5l1-3M${c + 9} 812v11M${c + 49} 812l2 5-2 6`} stroke="#ff0" />
              <ellipse cx={c + 46} cy="817.500" rx="1.500" ry="5" stroke="#fff" />
            </>
          )}
          <path d={`M${c - 2} ${k ? 812 : 806}h4v${k ? 18 : 24}h-4z`} stroke="#fff" />
          {k < 4 && <path d={`M${c - 2} 830.500h5`} stroke="#ff0" />}
        </g>
      ))}
    </>
  );
}

function Drawing() {
  return (
    <svg viewBox="228 197 1446 930" className="block size-full" fill="none" shapeRendering="crispEdges" role="img" aria-label="楼层平面: 5">
      <CurvedWall />
      <StraightWall />
      <g stroke="#fff">
        <circle cx="408" cy="428.500" r="13.500" />
        <path d="M397 438l11 11 11-11" />
        <path d="M401 441q7 3 14 0l-7 7z" fill="#fff" />
        <path d="M405 428.500h3M404 452.500h3" />
        <circle cx="1000" cy="799.500" r="13.500" />
        <path d="M988 793q-2 7 1 16l-9-9z" fill="#fff" />
        <path d="M988 809l6 4M972 799.500h3M997 799.500h3" />
      </g>
    </svg>
  );
}

function ScrollArrow({ dir }: { dir: "up" | "down" | "left" | "right" }) {
  const d = { up: "M0 6l4-4 4 4z", down: "M0 2l4 4 4-4z", left: "M6 0 2 4l4 4z", right: "M2 0l4 4-4 4z" }[dir];
  return (
    <svg viewBox="0 0 8 8" className="m-1 size-2 shrink-0" aria-hidden>
      <path d={d} fill="#333" />
    </svg>
  );
}

function NavBar() {
  return (
    <div className="absolute top-[30px] right-0.5 flex h-[114px] w-8 flex-col items-center rounded-sm border border-[#5c5c5c] bg-[#484848]">
      <svg viewBox="0 0 32 114" className="h-[112px] w-[30px]" fill="none" aria-hidden>
        <path d="M24 3l4 4M28 3l-4 4" stroke="#aaa" />
        <path d="M8 21h14v14q-2 4-8 4-9-1-9-9 0-6 3-9z" fill="#999" />
        <circle cx="14" cy="30" r="5" stroke="#555" strokeWidth="1.500" />
        <path d="M13 50l3 3 3-3M13 92l3 3 3-3" fill="#333" />
        <text x="16" y="42" fontSize="9" fontWeight="bold" fill="#3a6ea0">2D</text>
        <path d="M3 57h26" stroke="#222" />
        <path d="M8 66h11v11H8z" fill="#5f8a4f" stroke="#3a7a2a" />
        <circle cx="19" cy="76" r="3" fill="#bbb" />
        <path d="M21 78l4 4" stroke="#999" strokeWidth="1.500" />
        <circle cx="26" cy="108" r="3.500" stroke="#aaa" />
        <path d="M24 107h4l-2 3z" fill="#aaa" />
      </svg>
    </div>
  );
}

function ViewControls() {
  return (
    <div className="flex items-center gap-1 pl-5 text-xs">
      <button className="mr-2 w-[46px] font-['Liberation_Sans'] whitespace-pre">1  :  100</button>
      <button aria-label="详细程度"><Glyph><path d="M.5 2.500h15v11H.5z" fill="#fff" strokeWidth="1.200" /></Glyph></button>
      <button aria-label="视觉样式" className="ml-0.5"><Glyph><path d="M1 6l4-4h10v7l-4 5H1zM1 6h10v8M11 6l4-4" fill="#fff" strokeWidth="1.200" /></Glyph></button>
      <button aria-label="日光路径开关">
        <Glyph>
          <circle cx="6" cy="7" r="3" fill="#ffd34d" stroke="#d08a10" />
          <path d="M6 1v2M1 7h1M2 3l1 1M10 3 9 4M2 11l1-1" stroke="#d08a10" strokeWidth="1.500" />
          <path d="M9 9l5 5M14 9l-5 5" stroke="#d01818" strokeWidth="2" />
        </Glyph>
      </button>
      <button aria-label="阴影" className="ml-0.5">
        <Glyph>
          <circle cx="7" cy="6" r="4.500" fill="#d8ebfa" stroke="#4b8cc8" />
          <path d="M3 13h6" stroke="#999" strokeWidth="2" />
          <path d="M9 9l5 5M14 9l-5 5" stroke="#d01818" strokeWidth="2" />
        </Glyph>
      </button>
      <button aria-label="裁剪视图">
        <Glyph>
          <path d="M3 6v9M1 6h2M4 13V3h10v4M6 13V6h6" strokeWidth="1.200" stroke={BLUE} />
          <path d="M8 8l6 6M14 8l-6 6" stroke="#d01818" strokeWidth="2" />
        </Glyph>
      </button>
      <button aria-label="显示裁剪区域">
        <Glyph>
          <path d="M3 5v10M1 5h2M4 13V3h6M6 13V6h3" strokeWidth="1.200" stroke={BLUE} />
          <path d="M6 10h4" stroke="#c22" />
          <circle cx="12" cy="6" r="3" fill="#bfe0fb" stroke={BLUE} />
          <path d="M12 9v4" stroke={BLUE} strokeWidth="2" />
        </Glyph>
      </button>
      <button aria-label="临时隐藏">
        <Glyph>
          <circle cx="4" cy="7" r="2.500" />
          <circle cx="10" cy="10" r="2.500" />
          <path d="M6 8l2 1M2 5l5-3M12 9l3-5-3-1" />
        </Glyph>
      </button>
      <button aria-label="显示隐藏的图元" className="ml-1">
        <Glyph>
          <circle cx="8" cy="5" r="3" fill="#bfe0fb" stroke={BLUE} />
          <path d="M8 8v5" stroke={BLUE} strokeWidth="2" />
        </Glyph>
      </button>
      <button aria-label="分析模型" className="ml-1.5">
        <Glyph>
          <path d="M2 14V5l3-3h9v9l-2 3M5 2v10M8 2v12M11 2v12M2 6h12" />
          <path d="M3 10h9" stroke="#c22" />
        </Glyph>
      </button>
    </div>
  );
}

function Canvas() {
  return (
    <main className="flex min-w-0 flex-1 flex-col border-l border-[#777] bg-[#f0f0f0] pb-0.5">
      <div className="flex min-h-0 flex-1">
        <div className="relative min-w-0 flex-1 bg-black">
          <Drawing />
          <div className="absolute top-1.5 right-1 flex items-center gap-1.5">
            <button aria-label="最小化视图" className="pt-1"><svg viewBox="0 0 12 12" className="size-3"><path d="M1 5h11v3H1z" fill="#fff" /></svg></button>
            <button aria-label="还原视图">
              <svg viewBox="0 0 12 12" className="size-3" fill="none"><path d="M4 1h7v7M1.500 4h7v7h-7z" stroke="#fff" strokeWidth="2" /></svg>
            </button>
            <button aria-label="关闭视图"><svg viewBox="0 0 12 12" className="size-3"><path d="M2 1l8 10M10 1 2 11" stroke="#fff" strokeWidth="3" /></svg></button>
          </div>
          <NavBar />
        </div>
        <div className="flex w-4 flex-col items-center bg-[#f2f2f2]">
          <ScrollArrow dir="up" />
          <div className="flex flex-1 items-center">
            <span className="h-[15px] w-[15px] rounded-xs border border-[#999] bg-linear-to-r from-[#fafafa] to-[#d4d4d4]" />
          </div>
          <ScrollArrow dir="down" />
        </div>
      </div>
      <div className="flex h-[17px] items-center">
        <ViewControls />
        <ScrollArrow dir="left" />
        <div className="flex flex-1 justify-center">
          <span className="h-[15px] w-[15px] rounded-xs border border-[#999] bg-linear-to-b from-[#fafafa] to-[#d4d4d4]" />
        </div>
        <ScrollArrow dir="right" />
        <svg viewBox="0 0 16 16" className="size-4" aria-hidden>
          <path d="M6 13h2M10 13h2M14 13h2M10 9h2M14 9h2M14 5h2" stroke="#aaa" strokeWidth="2" />
        </svg>
      </div>
    </main>
  );
}

/* ---------- project browser ---------- */

type Node = { name: string; kids?: Node[]; closed?: boolean; icon?: ReactNode; current?: boolean };

const leaf = (...names: string[]): Node[] => names.map((name) => ({ name }));

const TREE: Node[] = [
  {
    name: "视图 (视图分类)",
    icon: <path d="M4 1.500H1.500V4M12 1.500h2.500V4M4 14.500H1.500V12M12 14.500h2.500V12M5 6l2-2h4v5l-2 2H5z" strokeWidth="1.300" />,
    kids: [
      {
        name: "???",
        kids: [
          { name: "结构平面", closed: true },
          { name: "楼层平面", kids: [{ name: "5", current: true }] },
          { name: "天花板平面", closed: true },
          { name: "三维视图", closed: true },
        ],
      },
      {
        name: "建筑",
        kids: [
          { name: "楼层平面", kids: leaf("1", "2", "【审核】建筑结构2", "场地") },
          { name: "天花板平面", closed: true },
          { name: "三维视图", closed: true },
          { name: "立面", kids: leaf("东", "北", "南", "西") },
          { name: "面积平面", kids: leaf("1") },
        ],
      },
    ],
  },
  {
    name: "图例",
    icon: (
      <>
        <path d="M.5 1.500h15v13H.5z" fill="#eef0f3" strokeWidth="1.300" />
        <path d="M1 3h14" strokeWidth="2" />
        <path d="M3 7h3M3 11h3" strokeWidth="3" />
        <path d="M8 7h6M8 9h4M8 12h6" />
      </>
    ),
    kids: leaf("图例 1"),
  },
  {
    name: "明细表/数量",
    icon: (
      <>
        <path d="M.5 2.500h15v11H.5z" fill="#fff" strokeWidth="1.300" />
        <path d="M1 4h14" strokeWidth="2" />
        <path d="M1 7.500h14M1 10.500h14M5.500 5v8M10.500 5v8" stroke="#888" />
      </>
    ),
    kids: leaf(
      "0_图纸目录",
      "A_人防分区面积明细表",
      "A_使用面积明细表",
      "A_总建筑面积明细表",
      "A_防火分区面积明细表",
      "B_内墙明细表",
      "B_剪力墙明细表",
      "B_外墙明细表",
      "B_屋面明细表",
      "B_楼板明细表",
      "B_结构构架明细表",
      "B_结构柱明细表",
      "C_停车场明细表",
      "C_幕墙明细表",
      "C_扶手明细表",
      "C_楼梯明细表",
      "T_房间明细表",
      "T_窗明细表",
      "T_门明细表",
    ),
  },
  {
    name: "图纸 (全部)",
    icon: (
      <>
        <path d="M.5 2.500h11l4 4v8H.5z" fill="#eef0f3" strokeWidth="1.300" />
        <path d="M3 12V8h4v4zM8 5h3v7M3 6h5" />
      </>
    ),
    kids: leaf("BJ- - 设计变更单"),
  },
];

const GUIDE = "border-dotted border-[#999]";

function TreeItem({ node, depth, trail, last }: { node: Node; depth: number; trail: boolean[]; last: boolean }) {
  const branch = Boolean(node.kids || node.closed);
  return (
    <li>
      <div className="flex h-5 items-center">
        {trail.map((on, i) => (
          <span key={i} className="flex h-5 w-5 shrink-0 justify-center">
            {on && <span className={clsx("h-full border-l", GUIDE)} />}
          </span>
        ))}
        <span className="grid h-5 w-5 shrink-0 grid-cols-2 grid-rows-2">
          <span className={clsx(!(depth === 0 && node.name.startsWith("视图")) && "border-r", GUIDE)} />
          <span className={clsx("border-b", GUIDE)} />
          <span className={clsx(!last && "border-r", GUIDE)} />
          <span />
          {branch && (
            <button
              aria-label={node.closed ? "展开" : "折叠"}
              className="z-10 col-span-2 col-start-1 row-span-2 row-start-1 size-[9px] place-self-center rounded-xs border border-[#919191] bg-[#f6f6f6]"
            >
              <svg viewBox="0 0 7 7" className="block size-[7px]">
                <path d={node.closed ? "M1 3.500h5M3.500 1v5" : "M1 3.500h5"} stroke="#2a4a9c" />
              </svg>
            </button>
          )}
        </span>
        {node.icon ? (
          <span className="mr-1.5 ml-0.5"><Glyph>{node.icon}</Glyph></span>
        ) : (
          <span className={clsx("mr-0.5 w-1.5 border-b", GUIDE)} />
        )}
        <span className={clsx("whitespace-nowrap", node.current && "-ml-1 bg-[#e0e0e0] px-1 leading-5 font-bold")}>{node.name}</span>
      </div>
      {node.kids && <Tree nodes={node.kids} depth={depth + 1} trail={[...trail, !last]} />}
    </li>
  );
}

function Tree({ nodes, depth = 0, trail = [] }: { nodes: Node[]; depth?: number; trail?: boolean[] }) {
  // the sheets branch carries on below the fold
  const open = nodes[0].name.startsWith("BJ") || depth === 0;
  return (
    <ul>
      {nodes.map((n, i) => (
        <TreeItem key={n.name} node={n} depth={depth} trail={trail} last={!open && i === nodes.length - 1} />
      ))}
    </ul>
  );
}

function Browser() {
  return (
    <aside className="ml-1.5 flex w-[224px] shrink-0 flex-col border-r-2 border-l-2 border-[#5a5f6b] bg-[#d9e4f1] pr-1 pl-0.5">
      <PanelTitle>cutain wall south.rvt - 项目浏览器</PanelTitle>
      <div className="mb-0.5 flex min-h-0 flex-1 border-t-2 border-l border-[#6e6e6e] bg-white text-xs">
        <nav className="min-w-0 flex-1 overflow-hidden">
          <Tree nodes={TREE} />
        </nav>
        <div className="flex w-[15px] flex-col items-center bg-[#f0f0f0]">
          <ScrollArrow dir="up" />
          <div className="flex w-full flex-1 flex-col">
            <span className="flex h-[85%] items-center justify-center rounded-xs border border-[#999] bg-linear-to-r from-[#fafafa] to-[#c9c9c9]">
              <svg viewBox="0 0 7 8" className="h-2 w-[7px]"><path d="M0 1h7M0 4h7M0 7h7" stroke="#555" /></svg>
            </span>
          </div>
          <ScrollArrow dir="down" />
        </div>
      </div>
    </aside>
  );
}

/* ---------- status bar and taskbar ---------- */

function StatusBar() {
  const box = "appearance-none bg-white pl-1 text-xs text-[#777] h-[22px]";
  return (
    <footer className="flex h-6 items-center border-t border-[#888] bg-linear-to-b from-[#e2e2e2] to-[#bdbdbd] text-xs">
      <p className="min-w-0 flex-1 truncate pl-0.5">
        单击可进行选择; 按 Tab 键并单击可选择其他项目; 按 Ctrl 键并单击可将新项目添加到选择集; 按 Shift 键并单击可取消选择。
      </p>
      <div className="flex items-center">
        <button aria-label="工作集" className="mr-2.5">
          <Glyph>
            <path d="M6 6V3l3-2 3 2v3" stroke="#2f8a2f" strokeWidth="1.500" />
            <path d="M2 8l3-2v8l-2 1H2zM8 7h3v8H8zM13 7h2v7h-2z" fill="#dce6f0" stroke="#2a5f95" />
          </Glyph>
        </button>
        <div className="relative">
          <select aria-label="活动工作集" className={clsx(box, "w-[205px]")}><option></option></select>
          <Caret className="pointer-events-none absolute top-[10px] right-1 opacity-50" />
        </div>
        <div className="ml-1 flex h-[22px] w-[52px] items-center gap-1 bg-[#cbcbcb] pl-1">
          <Glyph><path d="M5 1h9v5h-3l-2 3-2 6H2l4-7z" fill="#eee" stroke="#888" /><path d="M6 4h7" stroke="#888" /></Glyph>
          :0
        </div>
        <button aria-label="设计选项" className="ml-1.5">
          <Glyph><path d="M1.500 1.500h13v13h-13zM2 4h12" strokeWidth="1.500" /><path d="M4 7h3M6 9h6M6 12h6" /></Glyph>
        </button>
        <button aria-label="拾取以进行编辑" className="mx-2">
          <Glyph><path d="M1 1h14v14H1z" fill="#999" stroke="#999" /><path d="M4 12h8M9 3v6l2 2" stroke="#eee" /></Glyph>
        </button>
        <div className="relative">
          <select aria-label="活动设计选项" className={clsx(box, "w-[154px]")}><option>主模型</option></select>
          <Caret className="pointer-events-none absolute top-[10px] right-1 opacity-50" />
        </div>
      </div>
      <label className="ml-[169px] flex items-center gap-1">
        <input type="checkbox" className="size-[13px] appearance-none border border-[#555] bg-white" />
        单击和拖曳
      </label>
      <button className="mr-[66px] ml-1 flex items-center">
        <Glyph><path d="M1 2h14l-5 6v6l-3-2V8z" fill="#eee" strokeWidth="1.200" /></Glyph>
        <span className="mt-1">:0</span>
      </button>
    </footer>
  );
}

const TASKS = [
  {
    name: "Autodesk Revit 20...",
    active: true,
    icon: (
      <>
        <path d="M0 0h16v9H0z" fill="#eee" stroke="none" />
        <path d="M0 9h16v7H0z" fill="#8a3c96" stroke="none" />
        <path d="M5 8V1h4q3 2 0 4H5l5 3" stroke="#111" strokeWidth="1.800" />
      </>
    ),
  },
  {
    name: "计算机",
    icon: (
      <>
        <path d="M4 2h11v9H4z" fill="#1c3fb8" stroke="#cdd6ea" strokeWidth="1.500" />
        <path d="M1 4h3v10H1zM6 14h8" fill="#dde3ee" stroke="#dde3ee" strokeWidth="1.500" />
      </>
    ),
  },
  {
    name: "百度一下，你就知道...",
    icon: (
      <>
        <path d="M13 11a5 5 0 1 1 0-4v2H5" stroke="#4fb7f2" strokeWidth="2.500" />
        <path d="M1 14C0 9 9 1 15 2" stroke="#f3c33c" strokeWidth="1.500" />
      </>
    ),
  },
  {
    name: "文档 1 - Microsoft ...",
    icon: (
      <>
        <path d="M5 1h10v14H3V5z" fill="#fff" stroke="#7d9bd0" />
        <path d="M1 3h9v8H1z" fill="#2b57a5" stroke="#1d3f80" />
        <path d="M3 5l1 4 1.500-3L7 9l1-4" stroke="#fff" />
        <path d="M11 7h3M11 10h3" stroke="#7d9bd0" />
      </>
    ),
  },
];

function Taskbar() {
  return (
    <nav className="flex h-[30px] items-center border-t border-[#1e3357] bg-linear-to-r from-[#36558c] via-[#4a6ba3] to-[#42649c] text-xs text-white">
      <button aria-label="开始" className="-mt-1 mr-4 ml-2 shrink-0">
        <svg viewBox="0 0 36 34" className="h-[34px] w-9">
          <circle cx="18" cy="17" r="16" fill="#2c5f9e" stroke="#a9c8e8" />
          <path d="M3 13a15 13 0 0 1 30 0q-15 6-30 0z" fill="#8fb6dd" opacity=".6" />
          <path d="M10 10q4-3 7-1l-1 7q-4-2-8 0z" fill="#f06a2a" />
          <path d="M19 10q4 2 8-1l-2 8q-4 2-8 0z" fill="#8cc63e" />
          <path d="M8 18q4-2 8 0l-2 7q-3-2-7 0z" fill="#3fa9f5" />
          <path d="M17 19q4 2 8 0l-2 7q-4 2-8 0z" fill="#ffd23c" />
        </svg>
      </button>
      <div className="flex min-w-0 flex-1 gap-1">
        {TASKS.map((t) => (
          <button
            key={t.name}
            className={clsx(
              "flex h-7 w-[158px] items-center gap-1 rounded-xs border px-2",
              t.active
                ? "border-[#d5deed] bg-linear-to-b from-[#a9b9d4] to-[#6f88b3]"
                : "border-[#8fa5c9] bg-linear-to-b from-[#6883b2] to-[#45659c]",
            )}
          >
            <Glyph>{t.icon}</Glyph>
            <span className="truncate">{t.name}</span>
          </button>
        ))}
      </div>
      <div className="flex items-center gap-2">
        <Glyph><path d="M1 7h14v7H1zM8 7q0-4 5-4" fill="#ddd" stroke="#ddd" /><path d="M2 9h12M2 11.500h12" strokeDasharray="2 1" /></Glyph>
        <span className="mr-1 flex size-4 items-center justify-center rounded-full border border-white bg-[#1d35c0] text-xs font-bold">?</span>
        <Glyph size="size-3.5"><path d="M6 1h5v4M4 3h5v4H4z" stroke="#fff" /><path d="M4 12h7l-3.500 3z" fill="#fff" stroke="none" /></Glyph>
        <Glyph size="size-3"><path d="M2 11l6-6 6 6z" fill="#fff" stroke="none" /></Glyph>
        <Glyph><path d="M1 6h3l5-4v12l-5-4H1z" fill="#f08c4a" stroke="#fff" /><path d="M11 4q4 4 0 8" stroke="#c33" strokeWidth="2" /></Glyph>
        <Glyph><path d="M1 1h14v14H1z" fill="#2f8fe0" stroke="#cfe6fb" /><path d="M4 1v14M6 5h8M6 9h8" stroke="#fff" strokeWidth="2" /></Glyph>
        <Glyph><circle cx="8" cy="8" r="7" fill="#c9ccd1" stroke="#eee" /><path d="M7 4q5 4 0 9" stroke="#fff" strokeWidth="2" /></Glyph>
        <Glyph>
          <path d="M3 1v14" stroke="#fff" strokeWidth="2" />
          <path d="M4 2h9v7H4z" fill="#eee" stroke="#fff" />
          <circle cx="11" cy="11" r="4" fill="#d42a1e" stroke="none" />
          <path d="M9.500 9.500l3 3M12.500 9.500l-3 3" stroke="#fff" />
        </Glyph>
        <Glyph><path d="M1 6h3l4-4v12l-4-4H1z" fill="#fff" stroke="none" /><path d="M10 5q3 3 0 6M12 3q5 5 0 10" stroke="#fff" /></Glyph>
        <Glyph><path d="M2 12v3M5 10v5M8 7v8M11 4v11M14 2v13" stroke="#fff" strokeWidth="2" /></Glyph>
        <time className="mx-3">16:26</time>
      </div>
      <button aria-label="显示桌面" className="h-[29px] w-3.5 border border-[#7f97c0] bg-[#5673a8]" />
    </nav>
  );
}

export default function App() {
  return (
    <div className="relative flex h-screen flex-col overflow-hidden bg-[#f0f0f0] font-['Noto_Sans','Noto_Sans_CJK_SC',sans-serif] text-black">
      <Defs />
      <AppButton />
      <TitleBar />
      <RibbonTabs />
      <Ribbon />
      <QuickAccess />
      <div className="h-8 shrink-0 border-b-2 border-[#8d8d8d] bg-[#e0e1e3]" />
      <div className="flex min-h-0 flex-1">
        <Properties />
        <div className="w-[7px] shrink-0 bg-[#f0f0f0]" />
        <Canvas />
        <Browser />
      </div>
      <StatusBar />
      <Taskbar />
    </div>
  );
}
